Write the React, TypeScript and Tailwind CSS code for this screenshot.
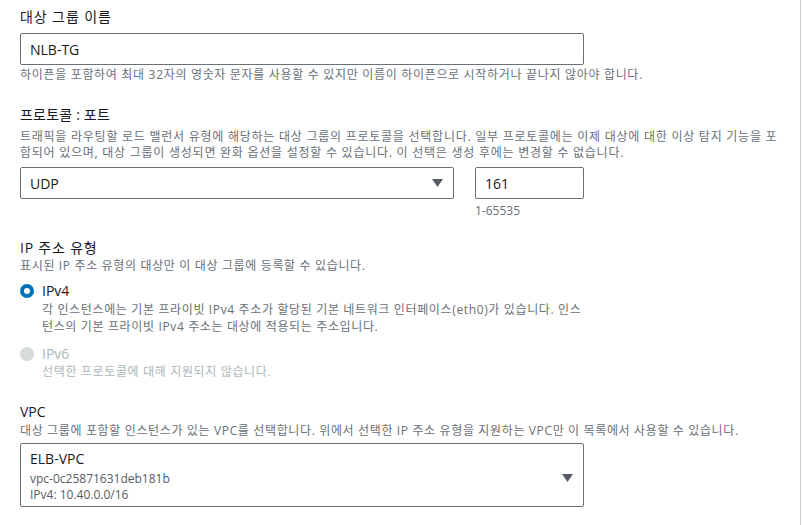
const font = { fontFamily: '"Open Sans", "Noto Sans CJK KR", sans-serif' }

function Caret() {
  return (
    <svg width="11" height="8" viewBox="0 0 11 8" className="shrink-0">
      <path d="M0 0 L11 0 L5.5 8 Z" fill="#545b64" />
    </svg>
  )
}

function Radio({ checked, disabled }: { checked?: boolean; disabled?: boolean }) {
  if (disabled) return <span className="block w-[14px] h-[14px] rounded-full bg-[#d5dbdb]" />
  return (
    <span
      className={
        checked
          ? "block w-[14px] h-[14px] rounded-full border-[4px] border-[#0073bb] bg-white"
          : "block w-[14px] h-[14px] rounded-full border-2 border-[#545b64] bg-white"
      }
    />
  )
}

export default function App() {
  return (
    <div
      className="w-[801px] h-[525px] bg-white border-r border-[#cfd4d4] overflow-hidden pl-5 text-[#16191f]"
      style={font}
    >
      {/* target group name */}
      <div className="pt-[6px] text-[14px] leading-[22px] tracking-[0.9px]">대상 그룹 이름</div>
      <div className="mt-[5px] w-[564px] h-[32px] border border-[#687078] rounded-[2px] flex items-center px-[9px] text-[14px]">
        NLB-TG
      </div>
      <div className="mt-px text-[12px] leading-[18px] text-[#687078] whitespace-nowrap tracking-[0.68px]">
        하이픈을 포함하여 최대 32자의 영숫자 문자를 사용할 수 있지만 이름이 하이픈으로 시작하거나 끝나지 않아야 합니다.
      </div>

      {/* protocol : port */}
      <div className="mt-5 text-[14px] leading-[22px] tracking-[0.2px]">프로토콜 : 포트</div>
      <div className="mt-[3px] text-[12px] leading-[16px] text-[#687078] whitespace-nowrap tracking-[0.75px]">
        트래픽을 라우팅할 로드 밸런서 유형에 해당하는 대상 그룹의 프로토콜을 선택합니다. 일부 프로토콜에는 이제 대상에 대한 이상 탐지 기능을 포
        <br />
        함되어 있으며, 대상 그룹이 생성되면 완화 옵션을 설정할 수 있습니다. 이 선택은 생성 후에는 변경할 수 없습니다.
      </div>
      <div className="mt-[6px] flex gap-[21px]">
        <div className="w-[434px] h-[32px] border border-[#687078] rounded-[2px] flex items-center justify-between pl-[9px] pr-[10px] text-[14px]">
          <span>UDP</span>
          <Caret />
        </div>
        <div>
          <div className="w-[109px] h-[32px] border border-[#687078] rounded-[2px] flex items-center px-[9px] text-[14px]">
            161
          </div>
          <div className="mt-[4px] text-[12px] leading-[16px] text-[#687078]">1-65535</div>
        </div>
      </div>

      {/* IP address type */}
      <div className="mt-[19px] text-[14px] leading-[20px] tracking-[0.8px]">IP 주소 유형</div>
      <div className="text-[12px] leading-[16px] text-[#687078] tracking-[0.65px]">
        표시된 IP 주소 유형의 대상만 이 대상 그룹에 등록할 수 있습니다.
      </div>
      <div className="mt-[7px] flex gap-[8px]">
        <div className="pt-[3px]">
          <Radio checked />
        </div>
        <div>
          <div className="text-[14px] leading-[20px]">IPv4</div>
          <div className="text-[12px] leading-[17px] text-[#687078] whitespace-nowrap tracking-[0.64px]">
            각 인스턴스에는 기본 프라이빗 IPv4 주소가 할당된 기본 네트워크 인터페이스(eth0)가 있습니다. 인스
            <br />
            턴스의 기본 프라이빗 IPv4 주소는 대상에 적용되는 주소입니다.
          </div>
        </div>
      </div>
      <div className="mt-[9px] flex gap-[8px]">
        <div className="pt-[3px]">
          <Radio disabled />
        </div>
        <div>
          <div className="text-[14px] leading-[20px] text-[#aab7b8]">IPv6</div>
          <div className="text-[12px] leading-[16px] text-[#aab7b8] tracking-[0.65px]">
            선택한 프로토콜에 대해 지원되지 않습니다.
          </div>
        </div>
      </div>

      {/* VPC */}
      <div className="mt-[22px] text-[14px] leading-[20px]">VPC</div>
      <div className="mt-px text-[12px] leading-[16px] text-[#687078] whitespace-nowrap tracking-[0.64px]">
        대상 그룹에 포함할 인스턴스가 있는 VPC를 선택합니다. 위에서 선택한 IP 주소 유형을 지원하는 VPC만 이 목록에서 사용할 수 있습니다.
      </div>
      <div className="mt-[4px] w-[564px] h-[64px] border border-[#687078] rounded-[2px] flex items-start justify-between pl-[9px] pr-[10px] pt-[5px]">
        <div>
          <div className="text-[14px] leading-[20px]">ELB-VPC</div>
          <div className="mt-[2px] text-[12px] leading-[16px] text-[#545b64]">vpc-0c25871631deb181b</div>
          <div className="text-[12px] leading-[16px] text-[#545b64]">IPv4: 10.40.0.0/16</div>
        </div>
        <div className="self-center">
          <Caret />
        </div>
      </div>
    </div>
  )
}
